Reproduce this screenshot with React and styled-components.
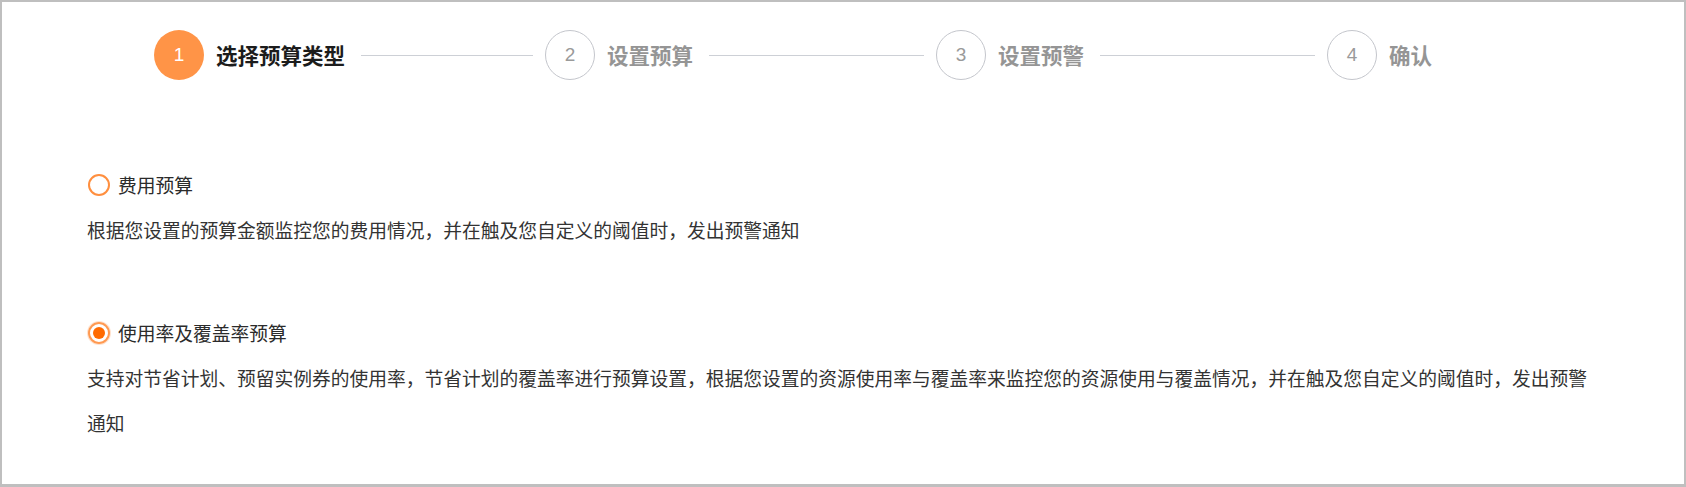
import React from "react";
import styled, { createGlobalStyle } from "styled-components";

const GlobalStyle = createGlobalStyle`
  html, body { margin: 0; padding: 0; background: #fff; }
  body { font-family: "Noto Sans CJK SC", "Noto Sans", sans-serif; }
  * { box-sizing: border-box; }
`;

const Frame = styled.div`
  width: 1686px;
  height: 487px;
  border: 2px solid #bfbfbf;
  border-bottom-width: 3px;
  background: #fff;
  overflow: hidden;
`;

const StepsBar = styled.div`
  display: flex;
  align-items: center;
  width: 1278px;
  margin: 28px 0 0 152px;
  height: 50px;
`;

const Step = styled.div`
  display: flex;
  align-items: center;
  flex: ${(p) => (p.$last ? "0 0 auto" : "1 1 0")};
  min-width: 0;
`;

const StepIcon = styled.div`
  flex: none;
  width: 50px;
  height: 50px;
  border-radius: 50%;
  display: flex;
  align-items: center;
  justify-content: center;
  font-family: "Liberation Sans", "Noto Sans", sans-serif;
  font-size: 19px;
  background: ${(p) => (p.$active ? "#ff9447" : "#fff")};
  border: ${(p) => (p.$active ? "none" : "1.5px solid #c4c6cc")};
  color: ${(p) => (p.$active ? "#fff" : "#9a9a9a")};
`;

const StepTitle = styled.div`
  flex: none;
  margin-left: 12px;
  font-size: 21.5px;
  line-height: 30px;
  font-weight: 700;
  white-space: nowrap;
  color: ${(p) => (p.$active ? "#1c1c1c" : "#959595")};
`;

const StepLine = styled.div`
  flex: 1;
  height: 1px;
  background: #cdd0d6;
  margin: 0 12px 0 16px;
`;

const Options = styled.div`
  display: flex;
  flex-direction: column;
  gap: 58px;
  padding: 82px 95px 0 85px;
`;

const Option = styled.div`
  display: flex;
  flex-direction: column;
`;

const OptionLabel = styled.label`
  display: flex;
  align-items: center;
  gap: 8px;
  height: 45px;
  font-size: 18.75px;
  color: #2b2b2b;
  cursor: pointer;
`;

const Radio = styled.span`
  flex: none;
  width: 22px;
  height: 22px;
  margin-left: 1px;
  border-radius: 50%;
  border: 2px solid ${(p) => (p.$checked ? "#ff9a52" : "#ff8f3f")};
  display: flex;
  align-items: center;
  justify-content: center;
  box-shadow: ${(p) => (p.$checked ? "0 0 0 1px rgba(255,140,60,0.25)" : "none")};
  &::after {
    content: "";
    width: 12px;
    height: 12px;
    border-radius: 50%;
    background: #ff6a00;
    display: ${(p) => (p.$checked ? "block" : "none")};
  }
`;

const Description = styled.p`
  margin: 0;
  font-size: 18.75px;
  line-height: 45px;
  color: #333;
`;

const steps = ["选择预算类型", "设置预算", "设置预警", "确认"];

const options = [
  {
    label: "费用预算",
    desc: "根据您设置的预算金额监控您的费用情况，并在触及您自定义的阈值时，发出预警通知",
    checked: false,
  },
  {
    label: "使用率及覆盖率预算",
    desc: "支持对节省计划、预留实例券的使用率，节省计划的覆盖率进行预算设置，根据您设置的资源使用率与覆盖率来监控您的资源使用与覆盖情况，并在触及您自定义的阈值时，发出预警通知",
    checked: true,
  },
];

export default function App() {
  return (
    <>
      <GlobalStyle />
      <Frame>
        <StepsBar>
          {steps.map((s, i) => {
            const last = i === steps.length - 1;
            const active = i === 0;
            return (
              <Step key={s} $last={last}>
                <StepIcon $active={active}>{i + 1}</StepIcon>
                <StepTitle $active={active}>{s}</StepTitle>
                {!last && <StepLine />}
              </Step>
            );
          })}
        </StepsBar>
        <Options>
          {options.map((o) => (
            <Option key={o.label}>
              <OptionLabel>
                <Radio $checked={o.checked} />
                {o.label}
              </OptionLabel>
              <Description>{o.desc}</Description>
            </Option>
          ))}
        </Options>
      </Frame>
    </>
  );
}
